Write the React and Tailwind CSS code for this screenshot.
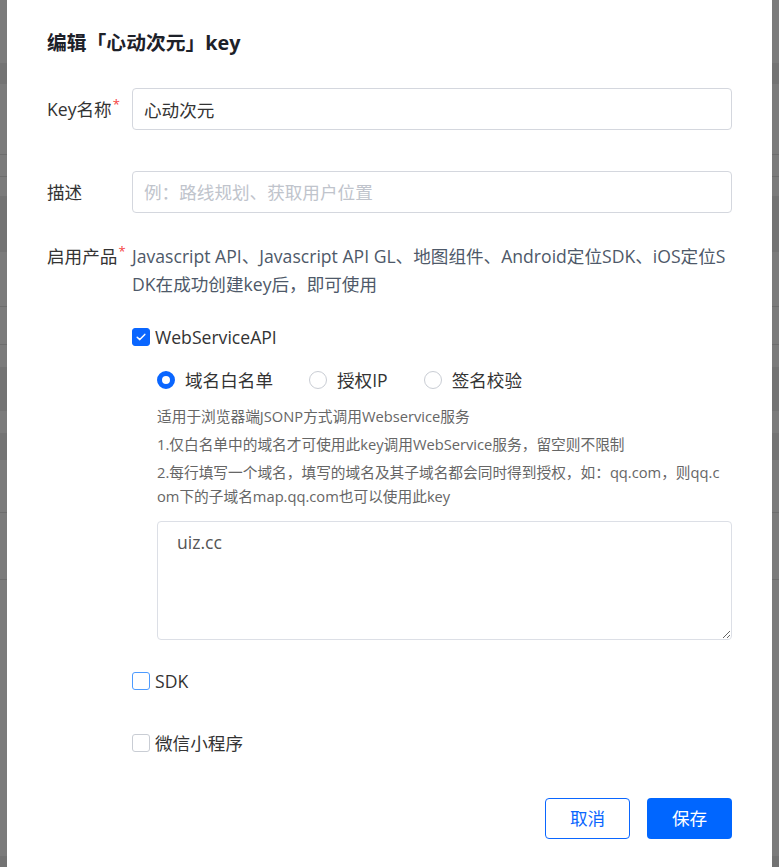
import React from 'react';

// Rows of the page behind the dimmed overlay — only the 7px strips at each side show.
const BACK_ROWS = [
  { h: 'h-[63px]', tone: 'base' },
  { h: 'h-[21px]', tone: 'dark' },
  { h: 'h-[71px]', tone: 'line' },
  { h: 'h-[22px]', tone: 'line' },
  { h: 'h-[19px]', tone: 'base' },
  { h: 'h-[56px]', tone: 'dark' },
  { h: 'h-[55px]', tone: 'line' },
  { h: 'h-[38px]', tone: 'line' },
  { h: 'h-[22px]', tone: 'base' },
  { h: 'h-[44px]', tone: 'dark' },
  { h: 'h-[22px]', tone: 'base' },
  { h: 'h-[27px]', tone: 'dark' },
  { h: 'h-[53px]', tone: 'line' },
  { h: 'h-[67px]', tone: 'line' },
  { h: 'h-[276px]', tone: 'base' },
  { h: 'h-[11px]', tone: 'dark' },
];

const TONES = {
  base: 'bg-[#7b7b7b]',
  dark: 'bg-[#737373]',
  line: 'bg-[#7b7b7b] border-b border-[#6d6d6d]',
};

function Backdrop() {
  return (
    <div className="flex flex-col">
      {BACK_ROWS.map((r, i) => (
        <div key={i} className={`${r.h} ${TONES[r.tone]}`} />
      ))}
    </div>
  );
}

function Required() {
  return <span className="ml-[1px] align-super text-[13px] leading-none text-[#f53f3f]">*</span>;
}

function Checkbox({ checked, tone = 'gray', label }) {
  const box = checked
    ? 'bg-[#0a66ff] border-[#0a66ff]'
    : tone === 'blue'
      ? 'bg-white border-[#4d9bff]'
      : 'bg-white border-[#c9cdd4]';
  return (
    <label className="flex h-[28px] items-center gap-[5px]">
      <span className={`flex h-[18px] w-[18px] items-center justify-center rounded-[3px] border ${box}`}>
        {checked && (
          <svg width="12" height="12" viewBox="0 0 12 12" fill="none">
            <path d="M2.2 6.2 L4.8 8.6 L9.8 3.4" stroke="white" strokeWidth="1.5" strokeLinecap="round" strokeLinejoin="round" />
          </svg>
        )}
      </span>
      <span className="text-[17.6px] text-[#333]">{label}</span>
    </label>
  );
}

function Radio({ checked, label }) {
  return (
    <label className="flex h-[28px] items-center gap-[10px]">
      <span
        className={`h-[18px] w-[18px] rounded-full bg-white ${
          checked ? 'border-[5px] border-[#0a66ff]' : 'border border-[#c9cdd4]'
        }`}
      />
      <span className="text-[17.6px] text-[#333]">{label}</span>
    </label>
  );
}

export default function App() {
  return (
    <div className="relative min-h-screen overflow-hidden font-['Open_Sans','Noto_Sans_CJK_SC',sans-serif]">
      <Backdrop />

      {/* ── Edit dialog ── */}
      <div className="absolute top-0 bottom-0 left-[7px] right-[7px] bg-white px-[40px] pt-[29px]">
        <h2 className="text-[19.8px] font-bold leading-[28px] text-[#1d2129]">
          编辑「心动次元」key
        </h2>

        {/* Key 名称 */}
        <div className="mt-[31px] flex items-center">
          <div className="w-[85px] shrink-0 text-[17.6px] text-[#333]">
            Key名称<Required />
          </div>
          <input
            defaultValue="心动次元"
            className="h-[42px] flex-1 rounded-[4px] border border-[#d4d7de] px-[11px] text-[17.6px] text-[#333] outline-none"
          />
        </div>

        {/* 描述 */}
        <div className="mt-[41px] flex items-center">
          <div className="w-[85px] shrink-0 text-[17.6px] text-[#333]">描述</div>
          <input
            placeholder="例：路线规划、获取用户位置"
            className="h-[42px] flex-1 rounded-[4px] border border-[#d4d7de] px-[11px] text-[17.6px] text-[#333] outline-none placeholder:text-[#c0c4cc]"
          />
        </div>

        {/* 启用产品 */}
        <div className="mt-[29px] flex items-start">
          <div className="w-[85px] shrink-0 text-[17.6px] leading-[28px] text-[#333]">
            启用产品<Required />
          </div>
          <div className="min-w-0 flex-1">
            <p className="text-[17.6px] leading-[28px] text-[#4e5969]">
              <span className="block whitespace-nowrap">
                Javascript API、Javascript API GL、地图组件、Android定位SDK、iOS定位S
              </span>
              <span className="block whitespace-nowrap">DK在成功创建key后，即可使用</span>
            </p>

            <div className="mt-[25px]">
              <Checkbox checked label="WebServiceAPI" />
            </div>

            <div className="pl-[25px]">
              <div className="mt-[15px] flex items-center gap-[36px]">
                <Radio checked label="域名白名单" />
                <Radio label="授权IP" />
                <Radio label="签名校验" />
              </div>

              <div className="mt-[10px] text-[14.7px] leading-[24px] text-[#666]">
                <p>适用于浏览器端JSONP方式调用Webservice服务</p>
                <p className="mt-[4px]">1.仅白名单中的域名才可使用此key调用WebService服务，留空则不限制</p>
                <p className="mt-[4px]">
                  <span className="block whitespace-nowrap">
                    2.每行填写一个域名，填写的域名及其子域名都会同时得到授权，如：qq.com，则qq.c
                  </span>
                  <span className="block whitespace-nowrap">om下的子域名map.qq.com也可以使用此key</span>
                </p>
              </div>

              <textarea
                defaultValue="uiz.cc"
                className="mt-[13px] block h-[119px] w-full rounded-[4px] border border-[#dcdfe6] px-[19px] py-[8px] text-[17.6px] leading-[24px] text-[#555] outline-none"
              />
            </div>

            <div className="mt-[27px]">
              <Checkbox tone="blue" label="SDK" />
            </div>
            <div className="mt-[34px]">
              <Checkbox label="微信小程序" />
            </div>
          </div>
        </div>

        {/* Footer buttons */}
        <div className="mt-[41px] flex justify-end gap-[17px]">
          <button className="h-[41px] w-[85px] rounded-[4px] border border-[#0a66ff] bg-white text-[17.6px] text-[#0a66ff]">
            取消
          </button>
          <button className="h-[41px] w-[85px] rounded-[4px] bg-[#0066ff] text-[17.6px] text-white">
            保存
          </button>
        </div>
      </div>
    </div>
  );
}
